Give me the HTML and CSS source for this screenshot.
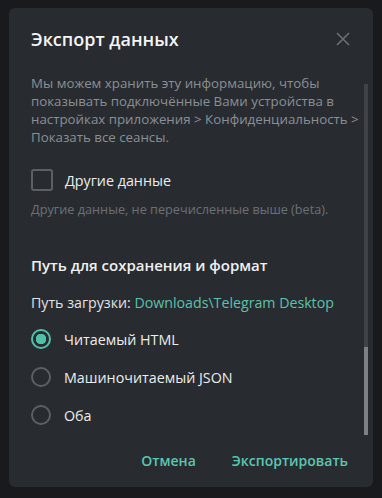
FILE: index.html
```html
<!DOCTYPE html>
<html lang="ru">
<head>
  <meta charset="UTF-8" />
  <title>Экспорт данных</title>
  <link rel="stylesheet" href="styles.css">
</head>
<body>
  <div class="dialog">
    <div class="header">
      <span class="title">Экспорт данных</span>
      <svg class="close" width="14" height="14" viewBox="0 0 14 14">
        <path d="M1 1 L13 13 M13 1 L1 13" stroke="#6b6f74" stroke-width="1.6" fill="none" />
      </svg>
    </div>
    <div class="body">
      <div class="content">
        <p class="desc">Мы можем хранить эту информацию, чтобы<br>показывать подключённые Вами устройства в<br>настройках приложения &gt; Конфиденциальность &gt;<br>Показать все сеансы.</p>

        <div class="option check-row">
          <span class="checkbox"></span>
          <span class="label">Другие данные</span>
        </div>
        <p class="hint">Другие данные, не перечисленные выше (beta).</p>

        <div class="section">Путь для сохранения и формат</div>
        <div class="path">Путь загрузки: <span class="link">Downloads\Telegram Desktop</span></div>

        <div class="radios">
          <div class="option">
            <span class="radio checked"></span>
            <span class="label">Читаемый HTML</span>
          </div>
          <div class="option">
            <span class="radio"></span>
            <span class="label">Машиночитаемый JSON</span>
          </div>
          <div class="option">
            <span class="radio"></span>
            <span class="label">Оба</span>
          </div>
        </div>
      </div>
      <div class="scrollbar"><div class="thumb"></div></div>
    </div>
    <div class="footer">
      <button class="btn">Отмена</button>
      <button class="btn">Экспортировать</button>
    </div>
  </div>
</body>
</html>
```

FILE: styles.css
```css
body {
  margin: 0;
  padding: 8px 9px 11px 9px;
  background: #181a1e;
  font-family: "Open Sans", "Noto Sans", sans-serif;
  color: #f2f2f2;
}
.dialog {
  width: 364px;
  height: 479px;
  background: #282c31;
  border-radius: 6px;
  display: flex;
  flex-direction: column;
}
.header {
  display: flex;
  justify-content: space-between;
  align-items: center;
  height: 60px;
  padding: 2px 23px 0 22px;
  box-sizing: border-box;
}
.title {
  font-size: 18px;
  font-weight: 600;
  color: #f5f5f5;
}
.body {
  display: flex;
  flex: 1;
}
.content {
  flex: 1;
  padding-left: 22px;
}
.desc {
  margin: 6px 0 0 0;
  font-size: 13.3px;
  line-height: 18px;
  color: #8b8f94;
}
.option {
  display: flex;
  align-items: center;
  gap: 13px;
  height: 38px;
}
.check-row {
  margin-top: 15px;
  gap: 12px;
}
.checkbox {
  width: 18px;
  height: 18px;
  border: 2px solid #5c6065;
  border-radius: 3px;
}
.label {
  font-size: 14.3px;
  color: #ececec;
}
.hint {
  margin: 1px 0 0 0;
  font-size: 12.7px;
  color: #6c7075;
}
.section {
  margin-top: 37px;
  font-size: 15px;
  font-weight: 600;
  color: #f0f0f0;
}
.path {
  margin-top: 18px;
  font-size: 14.2px;
  color: #e2e2e2;
}
.link {
  color: #5bc2ab;
}
.radios {
  margin-top: 8px;
}
.radio {
  width: 16px;
  height: 16px;
  border: 2px solid #5c6065;
  border-radius: 50%;
}
.radio.checked {
  border-color: #4fc1a8;
  background: radial-gradient(circle, #4fc1a8 0 5px, transparent 5.5px);
}
.scrollbar {
  width: 4px;
  margin: 16px 5px 0 0;
  height: 351px;
  background: #3f4348;
  display: flex;
  flex-direction: column;
  justify-content: flex-end;
}
.thumb {
  height: 88px;
  background: #7d8186;
}
.footer {
  display: flex;
  justify-content: flex-end;
  gap: 14px;
  padding: 0 14px 11px 0;
}
.btn {
  background: none;
  border: none;
  font-family: "Open Sans", "Noto Sans", sans-serif;
  font-size: 14px;
  font-weight: 600;
  color: #5cc6b0;
  padding: 6px 11px;
  cursor: pointer;
}
```
